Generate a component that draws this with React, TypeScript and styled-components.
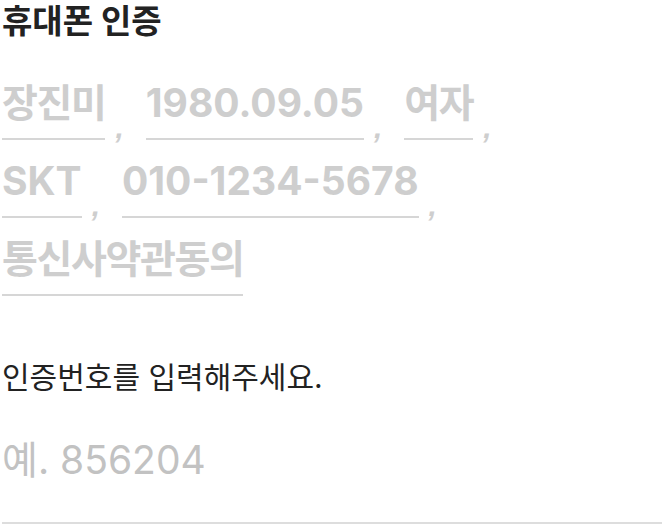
import styled, { createGlobalStyle } from "styled-components";

const GlobalStyle = createGlobalStyle`
  html, body {
    margin: 0;
    padding: 0;
    background: #ffffff;
  }
  body {
    font-family: Inter, "Noto Sans CJK KR", sans-serif;
    -webkit-font-smoothing: antialiased;
  }
`;

interface Field {
  value: string;
}

const rows: Field[][] = [
  [{ value: "장진미" }, { value: "1980.09.05" }, { value: "여자" }],
  [{ value: "SKT" }, { value: "010-1234-5678" }],
  [{ value: "통신사약관동의" }],
];

// 한글 값은 자간을 조금 줄임
const isHangul = (s: string) => /[가-힣]/.test(s);

const App = () => {
  return (
    <>
      <GlobalStyle />
      <Page>
        <Title>휴대폰 인증</Title>
        <Summary>
          {rows.map((row, i) => (
            <Row key={i}>
              {row.map((field) => (
                <Item key={field.value}>
                  <FieldValue $tight={isHangul(field.value)}>{field.value}</FieldValue>
                  {row.length > 1 && <Comma>,</Comma>}
                </Item>
              ))}
            </Row>
          ))}
        </Summary>
        <Label>인증번호를 입력해주세요.</Label>
        <CodeInput placeholder="예. 856204" inputMode="numeric" />
      </Page>
    </>
  );
};

const Page = styled.div`
  display: flex;
  flex-direction: column;
  padding: 0 0 0 2px;
  width: 660px;
`;

const Title = styled.h1`
  margin: 0;
  font-size: 33px;
  line-height: 42px;
  font-weight: 700;
  color: #222222;
`;

const Summary = styled.div`
  display: flex;
  flex-direction: column;
  gap: 18px;
  margin-top: 38px;
`;

const Row = styled.div`
  display: flex;
  align-items: flex-end;
`;

const Item = styled.div`
  display: flex;
  align-items: flex-end;
`;

const FieldValue = styled.span<{ $tight?: boolean }>`
  display: block;
  font-size: 39px;
  line-height: 46px;
  font-weight: 700;
  color: #cecece;
  letter-spacing: ${(p) => (p.$tight ? "-1.4px" : "0")};
  padding-bottom: 12px;
  border-bottom: 2px solid #d6d6d6;
`;

const Comma = styled.span`
  display: block;
  font-family: "Liberation Sans", sans-serif;
  font-size: 30px;
  font-weight: 700;
  font-style: italic;
  line-height: 1;
  color: #cecece;
  margin: 0 22px -3px 10px;
`;

const Label = styled.p`
  margin: 62px 0 0;
  font-size: 30px;
  line-height: 38px;
  font-weight: 400;
  color: #222222;
`;

const CodeInput = styled.input`
  margin-top: 40px;
  width: 100%;
  box-sizing: border-box;
  padding: 0 0 38px;
  border: none;
  border-bottom: 2px solid #dddddd;
  outline: none;
  background: transparent;
  font-family: Inter, "Noto Sans CJK KR", sans-serif;
  font-size: 39px;
  line-height: 48px;
  color: #222222;

  &::placeholder {
    color: #c2c2c2;
  }
`;

export default App;
